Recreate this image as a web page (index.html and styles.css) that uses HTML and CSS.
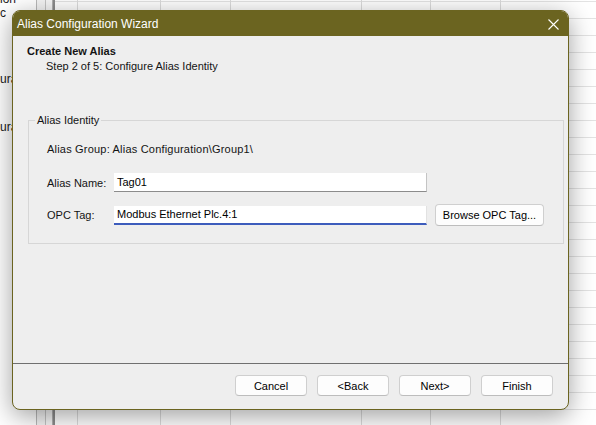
FILE: index.html
```
<!DOCTYPE html>
<html>
<head>
<meta charset="utf-8">
<link rel="stylesheet" href="styles.css">
</head>
<body>
<div class="desktop">
  <div class="tree">
    <span class="t t1">ion</span>
    <span class="t t2">c</span>
    <span class="t t3">uration</span>
    <span class="t t4">uration</span>
  </div>
  <div class="strip strip-a"></div>
  <div class="strip strip-b"></div>
  <div class="strip strip-c"></div>
  <div class="grid">
    <div class="col c1"></div>
    <div class="col c2"></div>
    <div class="col c3"></div>
    <div class="col c4"></div>
    <div class="col c5"></div>
    <div class="col c6"></div>
    <div class="col c7"></div>
  </div>
</div>

<div class="dialog">
  <div class="titlebar">
    <span class="title">Alias Configuration Wizard</span>
    <svg class="close" width="11" height="11" viewBox="0 0 11 11"><path d="M0.5 0.5 L10.5 10.5 M10.5 0.5 L0.5 10.5" stroke="#ffffff" stroke-width="1.1" fill="none"/></svg>
  </div>
  <div class="body">
    <div class="header">
      <div class="h-title">Create New Alias</div>
      <div class="h-sub">Step 2 of 5: Configure Alias Identity</div>
    </div>
    <div class="group">
      <span class="legend">Alias Identity</span>
      <div class="info">Alias Group: Alias Configuration\Group1\</div>
      <div class="field field-name">
        <span class="label">Alias Name:</span>
        <div class="input">Tag01</div>
      </div>
      <div class="field field-tag">
        <span class="label">OPC Tag:</span>
        <div class="input focus">Modbus Ethernet Plc.4:1</div>
        <button class="btn browse">Browse OPC Tag...</button>
      </div>
    </div>
  </div>
  <div class="footer">
    <button class="btn nav">Cancel</button>
    <button class="btn nav">&lt;Back</button>
    <button class="btn nav">Next&gt;</button>
    <button class="btn nav">Finish</button>
  </div>
</div>
</body>
</html>
```
FILE: styles.css
```
* { box-sizing: border-box; }
html, body {
  margin: 0;
  padding: 0;
  width: 596px;
  height: 425px;
  overflow: hidden;
  background: #ffffff;
  font-family: "Liberation Sans", Arial, sans-serif;
}

/* background application */
.desktop {
  display: flex;
  height: 425px;
}
.tree {
  width: 37px;
  border-right: 1px solid #b9b9b9;
  display: flex;
  flex-direction: column;
  font-size: 12px;
  line-height: 14px;
  color: #1a1a1a;
  overflow: hidden;
  white-space: nowrap;
}
.t { display: block; height: 14px; }
.t1 { margin-top: -8px; }
.t2 { margin-top: 0; }
.t3 { margin-top: 52px; }
.t4 { margin-top: 34px; }
.strip-a { width: 9px; background: #f4f4f4; border-right: 1px solid #c4c4c4; }
.strip-b { width: 6px; background: #f6f6f6; }
.strip-c { width: 3px; background: #8c8c8c; border-left: 1px solid #b0b0b0; }
.grid {
  flex: 1;
  display: flex;
  background-image: repeating-linear-gradient(to bottom, #e3e3e3 0 1px, transparent 1px 17px);
  background-position: 0 1px;
}
.col { border-right: 1px solid #dcdcdc; height: 100%; }
.c1 { width: 23px; }
.c2 { width: 83px; }
.c3 { width: 70px; }
.c4 { width: 131px; }
.c5 { width: 69px; }
.c6 { width: 70px; }
.c7 { flex: 1; border-right: none; }

/* dialog window */
.dialog {
  position: absolute;
  left: 12px;
  top: 10px;
  width: 557px;
  height: 400px;
  border: 1px solid #6b6420;
  border-radius: 8px;
  overflow: hidden;
  background: #eeeeee;
  display: flex;
  flex-direction: column;
  box-shadow: 0 6px 26px rgba(0, 0, 0, 0.38);
  font-size: 11px;
  color: #141414;
}
.titlebar {
  height: 25px;
  background: #6b6420;
  display: flex;
  align-items: center;
  justify-content: space-between;
  padding: 0 9px 0 4px;
  flex-shrink: 0;
}
.title {
  color: #ffffff;
  font-size: 12px;
  font-family: "Liberation Sans", Arial, sans-serif;
}
.close { display: block; margin-top: 1px; }

.body {
  flex: 1;
  display: flex;
  flex-direction: column;
}
.header {
  padding-top: 8px;
  line-height: 15px;
}
.h-title {
  padding-left: 14px;
  font-weight: bold;
}
.h-sub {
  padding-left: 33px;
}

.group {
  position: relative;
  margin: 46px 4px 0 15px;
  border: 1px solid #d6d6d6;
  padding: 20px 0 17px 18px;
  display: flex;
  flex-direction: column;
}
.legend {
  position: absolute;
  left: 6px;
  top: -8px;
  padding: 0 2px;
  background: #eeeeee;
  line-height: 14px;
}
.info { line-height: 16px; height: 16px; letter-spacing: 0.2px; }
.field {
  display: flex;
  align-items: center;
}
.field-name { margin-top: 16px; }
.field-tag { margin-top: 12px; }
.label { width: 67px; flex-shrink: 0; }
.input {
  width: 313px;
  height: 19px;
  background: #ffffff;
  border-bottom: 1px solid #8c8c8c;
  border-right: 1px solid #c4c4c4;
  padding-left: 3px;
  line-height: 18px;
  color: #000000;
}
.input.focus {
  border-bottom: 2px solid #3d5cbc;
  border-right: 1px solid #e2e2e2;
  line-height: 17px;
}
.btn {
  font-family: "Liberation Sans", Arial, sans-serif;
  font-size: 11px;
  color: #000000;
  background: #fdfdfd;
  border: 1px solid #cfcfcf;
  border-bottom-color: #bdbdbd;
  border-radius: 4px;
  padding: 0;
  margin: 0;
}
.browse {
  margin-left: 8px;
  width: 109px;
  height: 22px;
}

.footer {
  height: 46px;
  border-top: 1px solid #6f6f6f;
  padding: 11px 15px 0 0;
  display: flex;
  justify-content: flex-end;
  gap: 10px;
  flex-shrink: 0;
}
.nav {
  width: 72px;
  height: 21px;
}
```
